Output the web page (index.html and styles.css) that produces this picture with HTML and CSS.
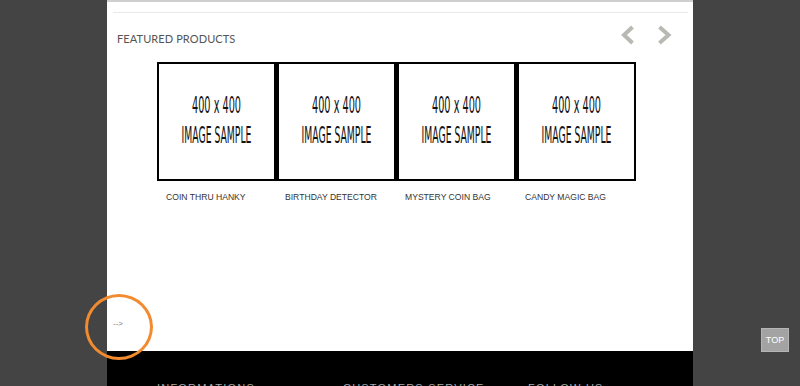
FILE: index.html
```html
<!DOCTYPE html>
<html>
<head>
<meta charset="utf-8">
<link rel="stylesheet" href="styles.css">
</head>
<body>
<div class="page">
  <div class="content">
    <div class="rule"></div>
    <div class="head">
      <h2 class="title">Featured Products</h2>
      <div class="nav">
        <svg class="arrow" width="14" height="20" viewBox="0 0 14 20"><polyline points="11.5,2 3,10 11.5,18" fill="none" stroke="#b9b9b4" stroke-width="4"/></svg>
        <svg class="arrow" width="15" height="20" viewBox="0 0 15 20"><polyline points="2.5,2 11.5,10 2.5,18" fill="none" stroke="#b9b9b4" stroke-width="4"/></svg>
      </div>
    </div>
    <div class="products">
      <div class="product">
        <div class="thumb"><svg width="115" height="115" viewBox="0 0 115 115"><g transform="scale(0.45 1)"><text x="127.8" y="49" text-anchor="middle" textLength="109" lengthAdjust="spacingAndGlyphs" class="ph">400 x 400</text><text x="127.8" y="79" text-anchor="middle" textLength="155.5" lengthAdjust="spacingAndGlyphs" class="ph">IMAGE SAMPLE</text></g></svg></div>
        <div class="name">Coin Thru Hanky</div>
      </div>
      <div class="product">
        <div class="thumb"><svg width="115" height="115" viewBox="0 0 115 115"><g transform="scale(0.45 1)"><text x="127.8" y="49" text-anchor="middle" textLength="109" lengthAdjust="spacingAndGlyphs" class="ph">400 x 400</text><text x="127.8" y="79" text-anchor="middle" textLength="155.5" lengthAdjust="spacingAndGlyphs" class="ph">IMAGE SAMPLE</text></g></svg></div>
        <div class="name">Birthday Detector</div>
      </div>
      <div class="product">
        <div class="thumb"><svg width="115" height="115" viewBox="0 0 115 115"><g transform="scale(0.45 1)"><text x="127.8" y="49" text-anchor="middle" textLength="109" lengthAdjust="spacingAndGlyphs" class="ph">400 x 400</text><text x="127.8" y="79" text-anchor="middle" textLength="155.5" lengthAdjust="spacingAndGlyphs" class="ph">IMAGE SAMPLE</text></g></svg></div>
        <div class="name">Mystery Coin Bag</div>
      </div>
      <div class="product">
        <div class="thumb"><svg width="115" height="115" viewBox="0 0 115 115"><g transform="scale(0.45 1)"><text x="127.8" y="49" text-anchor="middle" textLength="109" lengthAdjust="spacingAndGlyphs" class="ph">400 x 400</text><text x="127.8" y="79" text-anchor="middle" textLength="155.5" lengthAdjust="spacingAndGlyphs" class="ph">IMAGE SAMPLE</text></g></svg></div>
        <div class="name">Candy Magic Bag</div>
      </div>
    </div>
    <div class="note">--&gt;</div>
  </div>
  <footer class="footer">
    <div class="fcol">Informations</div>
    <div class="fcol">Customers Service</div>
    <div class="fcol">Follow Us</div>
  </footer>
</div>
<div class="highlight"></div>
<a class="top" href="#">TOP</a>
</body>
</html>
```

FILE: styles.css
```css
html, body {
  margin: 0;
  padding: 0;
  height: 386px;
  overflow: hidden;
}
body {
  background: #444444;
  font-family: "Liberation Sans", Arial, sans-serif;
}
.page {
  width: 586px;
  margin: 0 auto;
  background: #ffffff;
}
.content {
  height: 351px;
  box-sizing: border-box;
  border-top: 2px solid #cfcfcf;
  display: flex;
  flex-direction: column;
}
.rule {
  margin: 10px 5px 0 6px;
  border-top: 1px solid #e9e9e9;
}
.head {
  display: flex;
  justify-content: space-between;
  align-items: flex-start;
  margin-top: 12px;
  padding: 0 21px 0 10px;
  height: 25px;
}
.title {
  margin: 0;
  padding-top: 4px;
  font-family: Lato, "Open Sans", sans-serif;
  font-weight: normal;
  font-size: 11px;
  line-height: 20px;
  text-transform: uppercase;
  color: #555555;
  letter-spacing: 0.1px;
}
.nav {
  display: flex;
  gap: 22px;
}
.arrow {
  display: block;
}
.products {
  margin: 12px 0 0 50px;
  width: 478px;
  display: grid;
  grid-template-columns: repeat(4, 1fr);
}
.thumb {
  height: 119px;
  box-sizing: border-box;
  border: 2px solid #000000;
  background: #ffffff;
  display: flex;
  align-items: center;
  justify-content: center;
}
.thumb + .name {
  margin-top: 11px;
}
.product + .product .thumb {
  border-left-width: 3px;
}
.ph {
  font-family: "DejaVu Sans", sans-serif;
  font-size: 23px;
  fill: #111111;
}
.name {
  padding-left: 9px;
  font-size: 8.6px;
  line-height: 11px;
  text-transform: uppercase;
  color: #333333;
}
.note {
  margin-top: auto;
  padding: 0 0 22px 6px;
  font-size: 8px;
  line-height: 10px;
  color: #777777;
}
.footer {
  background: #000000;
  height: 35px;
  box-sizing: border-box;
  padding: 31px 0 0 50px;
  display: grid;
  grid-template-columns: 186px 185px auto;
}
.fcol {
  font-size: 11px;
  line-height: 13px;
  color: #a8a8a8;
  text-transform: uppercase;
  letter-spacing: 1.2px;
}
.highlight {
  position: absolute;
  left: 85px;
  top: 294px;
  width: 68px;
  height: 66px;
  box-sizing: border-box;
  border: 3px solid #f28b30;
  border-radius: 50%;
}
.top {
  position: absolute;
  left: 761px;
  top: 328px;
  width: 28px;
  height: 24px;
  box-sizing: border-box;
  background: #a3a3a3;
  border: 1px solid #b5b5b5;
  color: #ffffff;
  font-size: 9px;
  line-height: 22px;
  text-align: center;
  text-decoration: none;
}
```
